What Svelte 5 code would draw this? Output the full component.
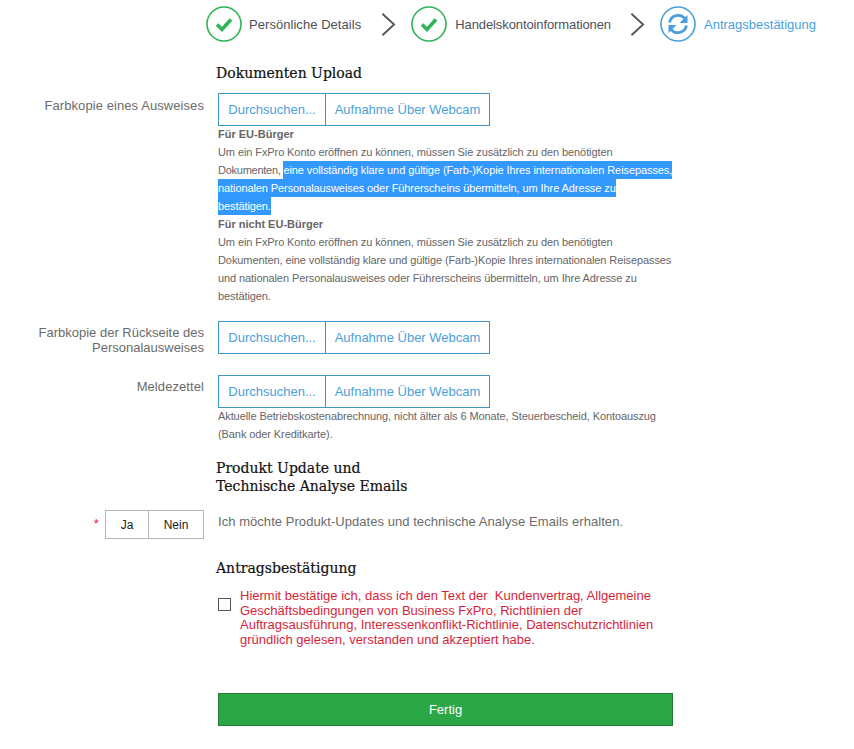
<script>
  const fileButtons = ['Durchsuchen...', 'Aufnahme Über Webcam'];
</script>

<main class="page">
  <nav class="steps">
    <div class="step first">
      <svg class="icon" viewBox="0 0 36 36"><circle cx="18" cy="18" r="17" fill="none" stroke="#2fb457" stroke-width="1.6"/><path d="M11 18.5l5 5 9-10" fill="none" stroke="#2fb457" stroke-width="3.6"/></svg>
      <span>Persönliche Details</span>
    </div>
    <svg class="chev" viewBox="0 0 16 26"><path d="M1.5 1.5L14 13 1.5 24.5" fill="none" stroke="#55565f" stroke-width="2"/></svg>
    <div class="step second">
      <svg class="icon" viewBox="0 0 36 36"><circle cx="18" cy="18" r="17" fill="none" stroke="#2fb457" stroke-width="1.6"/><path d="M11 18.5l5 5 9-10" fill="none" stroke="#2fb457" stroke-width="3.6"/></svg>
      <span>Handelskontoinformationen</span>
    </div>
    <svg class="chev" viewBox="0 0 16 26"><path d="M1.5 1.5L14 13 1.5 24.5" fill="none" stroke="#55565f" stroke-width="2"/></svg>
    <div class="step active">
      <svg class="icon" viewBox="0 0 36 36">
        <circle cx="18" cy="18" r="17" fill="none" stroke="#4a9fdc" stroke-width="1.6"/>
        <path d="M9.5 16.5a8.8 8.8 0 0 1 15.5-3.8" fill="none" stroke="#4a9fdc" stroke-width="2.8"/>
        <path d="M27.5 9v8h-8z" fill="#4a9fdc"/>
        <path d="M26.5 19.5a8.8 8.8 0 0 1-15.5 3.8" fill="none" stroke="#4a9fdc" stroke-width="2.8"/>
        <path d="M8.5 27v-8h8z" fill="#4a9fdc"/>
      </svg>
      <span>Antragsbestätigung</span>
    </div>
  </nav>

  <h2 class="h-docs">Dokumenten Upload</h2>

  <section class="row r1">
    <div class="label">Farbkopie eines Ausweises</div>
    <div class="content">
      <div class="btns">{#each fileButtons as b}<button type="button">{b}</button>{/each}</div>
      <div class="help">
        <strong>Für EU-Bürger</strong><br>
        Um ein FxPro Konto eröffnen zu können, müssen Sie zusätzlich zu den benötigten<br>
        <span class="lead">Dokumenten,&nbsp;</span><span class="sel">eine vollständig klare und gültige (Farb-)Kopie Ihres internationalen Reisepasses,</span><br>
        <span class="sel">nationalen Personalausweises oder Führerscheins übermitteln, um Ihre Adresse zu</span><br>
        <span class="sel">bestätigen.</span><br>
        <strong>Für nicht EU-Bürger</strong><br>
        Um ein FxPro Konto eröffnen zu können, müssen Sie zusätzlich zu den benötigten<br>
        Dokumenten, eine vollständig klare und gültige (Farb-)Kopie Ihres internationalen Reisepasses<br>
        und nationalen Personalausweises oder Führerscheins übermitteln, um Ihre Adresse zu<br>
        bestätigen.
      </div>
    </div>
  </section>

  <section class="row r2">
    <div class="label two">Farbkopie der Rückseite des<br>Personalausweises</div>
    <div class="content">
      <div class="btns">{#each fileButtons as b}<button type="button">{b}</button>{/each}</div>
    </div>
  </section>

  <section class="row r3">
    <div class="label short">Meldezettel</div>
    <div class="content">
      <div class="btns">{#each fileButtons as b}<button type="button">{b}</button>{/each}</div>
      <div class="help">
        Aktuelle Betriebskostenabrechnung, nicht älter als 6 Monate, Steuerbescheid, Kontoauszug<br>
        (Bank oder Kreditkarte).
      </div>
    </div>
  </section>

  <h2 class="h-prod">Produkt Update und<br>Technische Analyse Emails</h2>

  <section class="row r4">
    <div class="label toggle-wrap">
      <span class="req">*</span>
      <div class="toggle"><button type="button">Ja</button><button type="button">Nein</button></div>
    </div>
    <div class="content optin">Ich möchte Produkt-Updates und technische Analyse Emails erhalten.</div>
  </section>

  <h2 class="h-conf">Antragsbestätigung</h2>

  <div class="confirm">
    <span class="box"></span>
    <p>Hiermit bestätige ich, dass ich den Text der&nbsp; Kundenvertrag, Allgemeine<br>
    Geschäftsbedingungen von Business FxPro, Richtlinien der<br>
    Auftragsausführung, Interessenkonflikt-Richtlinie, Datenschutzrichtlinien<br>
    gründlich gelesen, verstanden und akzeptiert habe.</p>
  </div>

  <button class="submit" type="button">Fertig</button>
</main>

<style>
  :global(body) { margin: 0; background: #fff; }
  .page { width: 854px; height: 749px; overflow: hidden; font-family: "Liberation Sans", Arial, sans-serif; color: #6b6b6b; display: flow-root; }

  .steps { display: flex; align-items: center; height: 36px; margin: 6px 0 0 206px; }
  .step { display: flex; align-items: center; gap: 8px; font-size: 13px; color: #4e4f5b; white-space: nowrap; }
  .step.first { gap: 7px; letter-spacing: 0.05px; }
  .step.second { letter-spacing: -0.1px; margin-right: -1px; }
  .step.active { color: #4a9fdc; }
  .icon { width: 36px; height: 36px; flex: none; }
  .chev { width: 15px; height: 25px; margin: 0 15px 0 20px; flex: none; }

  h2 { font-family: "DejaVu Serif", Georgia, serif; font-weight: 400; font-size: 14px; line-height: 18px; color: #111; margin: 0 0 0 216px; -webkit-text-stroke: 0.2px #111; }
  .h-docs { margin-top: 22px; }
  .h-prod { margin-top: 16px; }
  .h-conf { margin-top: 20px; }

  .row { display: grid; grid-template-columns: 204px 455px; column-gap: 14px; }
  .r1 { margin-top: 11px; }
  .r2 { margin-top: 16px; }
  .r3 { margin-top: 20px; }
  .r4 { margin-top: 15px; }

  .label { font-size: 13px; line-height: 14px; letter-spacing: 0.08px; text-align: right; color: #6b6b6b; padding-top: 6px; }
  .label.two { padding-top: 4px; line-height: 15px; letter-spacing: 0; }
  .label.short { padding-top: 5px; }

  .btns { display: inline-flex; height: 33px; border: 1px solid #3f97c4; box-sizing: border-box; }
  .btns button { border: 0; background: #fff; color: #4a9fdc; font: 13px "Liberation Sans", Arial, sans-serif; padding: 0 9px; }
  .btns button:first-child { width: 107px; border-right: 1px solid #3f97c4; box-sizing: border-box; padding: 0; }
  .btns button:last-child { width: 163px; padding: 0; }

  .help { font-size: 11px; line-height: 18px; letter-spacing: -0.09px; color: #666; margin-top: -1px; white-space: nowrap; }
  .help strong { color: #666; letter-spacing: 0; }
  .lead { letter-spacing: -0.26px; }
  .sel { background: #3399ff; color: #fff; padding: 3px 0; }

  .toggle-wrap { display: flex; justify-content: flex-end; align-items: center; gap: 6px; padding: 0; }
  .req { color: #d2263c; font-size: 13px; margin-top: -2px; }
  .toggle { display: flex; height: 29px; border: 1px solid #b5b5b5; box-sizing: border-box; }
  .toggle button { border: 0; background: #fff; font: 12px "Liberation Sans", Arial, sans-serif; color: #222; padding: 0; }
  .toggle button:first-child { width: 43px; border-right: 1px solid #b5b5b5; box-sizing: border-box; }
  .toggle button:last-child { width: 54px; }
  .optin { font-size: 13px; line-height: 24px; letter-spacing: 0.05px; color: #6b6b6b; }

  .confirm { display: flex; margin: 12px 0 0 218px; align-items: flex-start; gap: 9px; width: 455px; }
  .box { width: 11px; height: 11px; border: 1px solid #555; flex: none; margin-top: 9px; }
  .confirm p { margin: 0; font-size: 13px; line-height: 14.5px; color: #d61f3a; white-space: nowrap; }

  .submit { display: block; margin: 46px 0 0 218px; width: 455px; height: 33px; background: #2ba748; border: 1px solid #217c38; box-sizing: border-box; color: #fff; font: 13px "Liberation Sans", Arial, sans-serif; }
</style>
